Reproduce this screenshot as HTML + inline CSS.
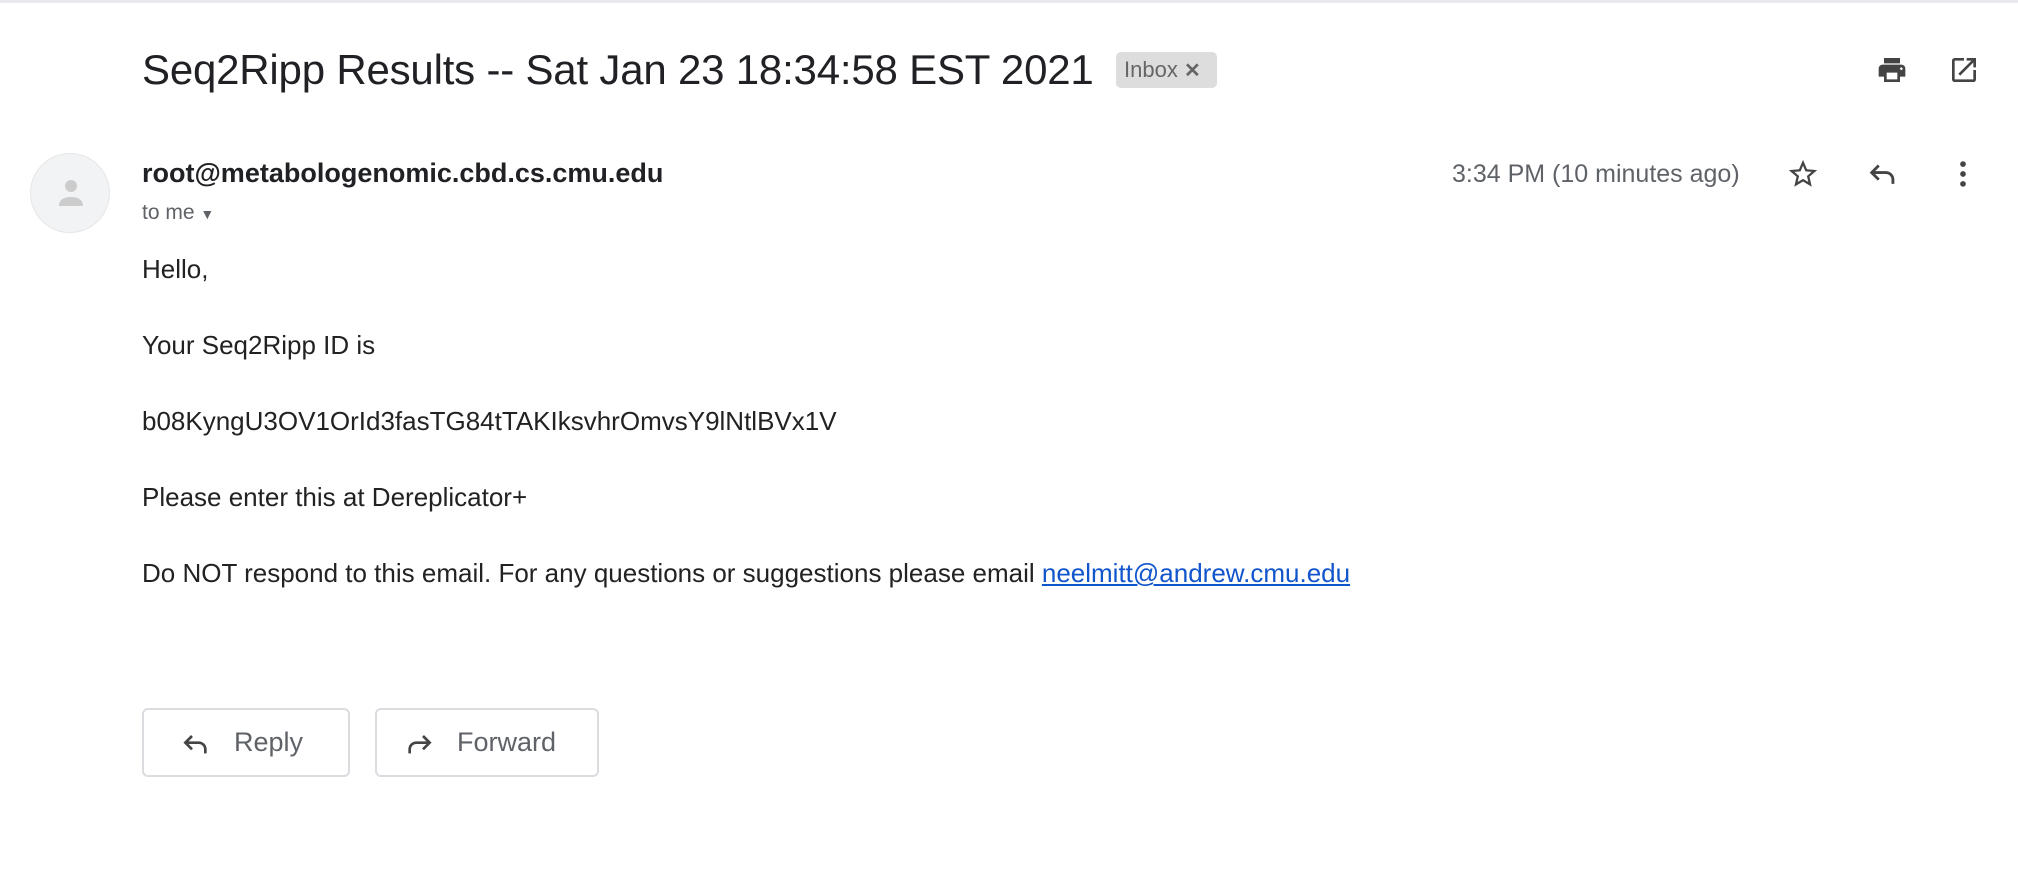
<!DOCTYPE html>
<html><head><meta charset="utf-8"><style>
body{margin:0;width:2018px;height:878px;background:#fff;position:relative;overflow:hidden;font-family:"Liberation Sans",Arial,sans-serif;}
.a{position:absolute;white-space:nowrap}
.top{position:absolute;left:0;top:0;width:2018px;height:3px;background:#e8eaed}
.title{left:142px;top:44px;font-size:42px;color:#202124;line-height:52px;letter-spacing:-0.2px}
.chip{left:1116px;top:52px;width:101px;height:36px;background:#ddd;border-radius:5px;font-size:22px;color:#666;line-height:36px;box-sizing:border-box;padding-left:8px}
.avatar{left:30px;top:153px;width:80px;height:80px;border-radius:50%;background:#f1f3f4;border:1px solid #e6e6e6;box-sizing:border-box}
.sender{left:142px;top:158px;font-size:27px;font-weight:bold;color:#202124}
.tome{left:142px;top:201px;font-size:21px;color:#5f6368}
.time{left:1452px;top:160px;font-size:25px;color:#5f6368}
.body{left:142px;font-size:26px;color:#222}
.btn{position:absolute;top:708px;height:69px;border:2px solid #dadce0;border-radius:6px;box-sizing:border-box;font-size:27px;color:#5f6368;line-height:65px}
a{color:#15c}
</style></head><body>
<div class="top"></div>
<div class="a title">Seq2Ripp Results -- Sat Jan 23 18:34:58 EST 2021</div>
<div class="a chip">Inbox <span style="font-weight:bold;font-size:20px">✕</span></div>
<svg class="a" style="left:1876px;top:54px" width="32" height="32" viewBox="0 0 24 24"><path fill="#444" d="M19 8H5c-1.66 0-3 1.34-3 3v6h4v4h12v-4h4v-6c0-1.660-1.340-3-3-3zm-3 11H8v-5h8v5zm3-7c-.55 0-1-.45-1-1s.45-1 1-1 1 .45 1 1-.45 1-1 1zm-1-9H6v4h12V3z"/></svg>
<svg class="a" style="left:1948px;top:54px" width="32" height="32" viewBox="0 0 24 24"><path fill="#444" d="M19 19H5V5h7V3H5a2 2 0 00-2 2v14a2 2 0 002 2h14c1.1 0 2-.9 2-2v-7h-2v7zM14 3v2h3.59l-9.830 9.830 1.410 1.410L19 6.41V10h2V3h-7z"/></svg>
<div class="a avatar"><svg width="80" height="80" viewBox="0 0 80 80"><circle cx="40" cy="32" r="6" fill="#ccc"/><path d="M28 52c0-7 6-9 12-9s12 2 12 9z" fill="#ccc"/></svg></div>
<div class="a sender">root@metabologenomic.cbd.cs.cmu.edu</div>
<div class="a tome">to me <span style="font-size:14px">▼</span></div>
<div class="a time">3:34 PM (10 minutes ago)</div>
<svg class="a" style="left:1786px;top:157px" width="34" height="34" viewBox="0 0 24 24"><path fill="#444" d="M22 9.24l-7.19-.62L12 2 9.19 8.63 2 9.24l5.46 4.73L5.82 21 12 17.27 18.18 21l-1.63-7.03L22 9.24zM12 15.4l-3.76 2.27 1-4.28-3.32-2.88 4.38-.38L12 6.1l1.71 4.04 4.38.38-3.32 2.88 1 4.28L12 15.4z"/></svg>
<svg class="a" style="left:1866px;top:157px" width="34" height="34" viewBox="0 0 24 24"><path fill="none" stroke="#444" stroke-width="2" d="M9 6L4 11l5 5M4 11h10a5 5 0 015 5v3"/></svg>
<svg class="a" style="left:1946px;top:157px" width="34" height="34" viewBox="0 0 24 24"><circle cx="12" cy="5" r="2" fill="#444"/><circle cx="12" cy="12" r="2" fill="#444"/><circle cx="12" cy="19" r="2" fill="#444"/></svg>
<div class="a body" style="top:254px">Hello,</div>
<div class="a body" style="top:330px">Your Seq2Ripp ID is</div>
<div class="a body" style="top:406px">b08KyngU3OV1OrId3fasTG84tTAKIksvhrOmvsY9lNtlBVx1V</div>
<div class="a body" style="top:482px">Please enter this at Dereplicator+</div>
<div class="a body" style="top:558px">Do NOT respond to this email. For any questions or suggestions please email <a href="#">neelmitt@andrew.cmu.edu</a></div>
<div class="btn" style="left:142px;width:208px"><svg style="position:absolute;left:36px;top:18px" width="32" height="32" viewBox="0 0 24 24"><path fill="none" stroke="#444" stroke-width="2" d="M9 6L4 11l5 5M4 11h10a5 5 0 015 5v3"/></svg><span style="position:absolute;left:90px">Reply</span></div>
<div class="btn" style="left:375px;width:224px"><svg style="position:absolute;left:26px;top:18px" width="32" height="32" viewBox="0 0 24 24"><path fill="none" stroke="#444" stroke-width="2" d="M15 6l5 5-5 5M20 11H10a5 5 0 00-5 5v3"/></svg><span style="position:absolute;left:80px">Forward</span></div>
</body></html>
